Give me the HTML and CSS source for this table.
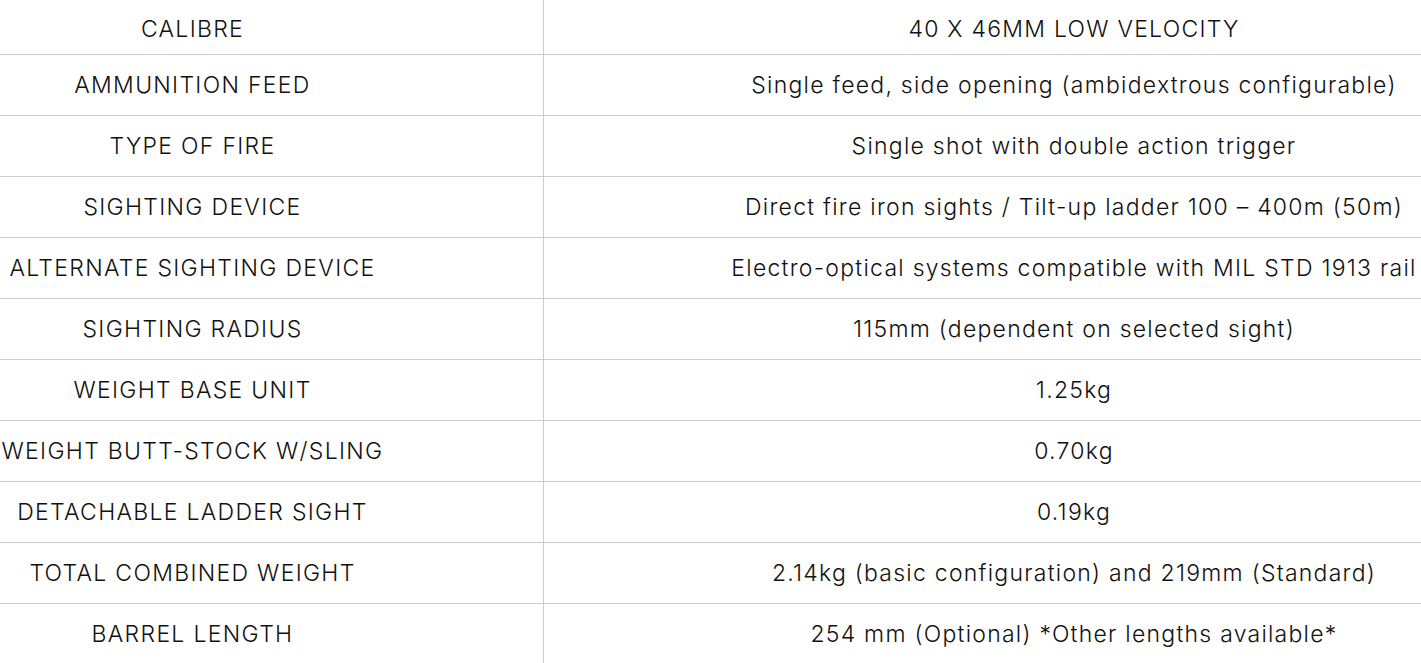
FILE: index.html
```html
<!DOCTYPE html>
<html>
<head>
<meta charset="utf-8">
<link rel="stylesheet" href="styles.css">
</head>
<body>
<div class="specs">
  <div class="row"><div class="label">CALIBRE</div><div class="value">40 X 46MM LOW VELOCITY</div></div>
  <div class="row"><div class="label">AMMUNITION FEED</div><div class="value">Single feed, side opening (ambidextrous configurable)</div></div>
  <div class="row"><div class="label">TYPE OF FIRE</div><div class="value">Single shot with double action trigger</div></div>
  <div class="row"><div class="label">SIGHTING DEVICE</div><div class="value">Direct fire iron sights / Tilt-up ladder 100 – 400m (50m)</div></div>
  <div class="row"><div class="label">ALTERNATE SIGHTING DEVICE</div><div class="value">Electro-optical systems compatible with MIL STD 1913 rail</div></div>
  <div class="row"><div class="label">SIGHTING RADIUS</div><div class="value">115mm (dependent on selected sight)</div></div>
  <div class="row"><div class="label">WEIGHT BASE UNIT</div><div class="value">1.25kg</div></div>
  <div class="row"><div class="label">WEIGHT BUTT-STOCK W/SLING</div><div class="value">0.70kg</div></div>
  <div class="row"><div class="label">DETACHABLE LADDER SIGHT</div><div class="value">0.19kg</div></div>
  <div class="row"><div class="label">TOTAL COMBINED WEIGHT</div><div class="value">2.14kg (basic configuration) and 219mm (Standard)</div></div>
  <div class="row"><div class="label">BARREL LENGTH</div><div class="value">254 mm (Optional) *Other lengths available*</div></div>
</div>
</body>
</html>
```
FILE: styles.css
```css
html, body {
  margin: 0;
  padding: 0;
  background: #fff;
  overflow: hidden;
}
body {
  font-family: "Inter", "Noto Sans", sans-serif;
  font-size: 23px;
  font-weight: 300;
  color: #111;
}
.specs {
  display: flex;
  flex-direction: column;
  width: 1421px;
}
.row {
  display: flex;
  height: 61px;
  border-bottom: 1px solid #cccccc;
  box-sizing: border-box;
}
.row:first-child {
  height: 55px;
}
.label, .value {
  display: flex;
  align-items: center;
  justify-content: center;
  white-space: nowrap;
  box-sizing: border-box;
}
.label {
  width: 544px;
  flex: none;
  padding-right: 158px;
  border-right: 1px solid #cccccc;
  letter-spacing: 1.3px;
}
.value {
  flex: 1;
  padding-left: 183px;
  letter-spacing: 1.25px;
}
.row:first-child .label,
.row:first-child .value {
  padding-top: 3px;
}
```
